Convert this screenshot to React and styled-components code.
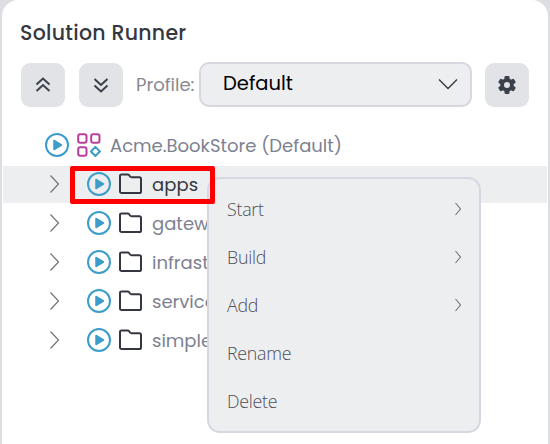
import React from "react";
import styled, { createGlobalStyle } from "styled-components";

const GlobalStyle = createGlobalStyle`
  * { box-sizing: border-box; }
  body { margin: 0; background: #dddde4; }
`;

const Panel = styled.main`
  position: relative;
  width: 546px;
  height: 444px;
  margin-left: 2px;
  overflow: hidden;
  background: #fff;
  border-radius: 16px 16px 0 0;
  font-family: Poppins, Inter, sans-serif;
  font-feature-settings: "cv11" 1;
`;

const Title = styled.h1`
  margin: 0;
  padding: 18px 0 0 18px;
  height: 63px;
  font-size: 20.5px;
  line-height: 30px;
  font-weight: 500;
  letter-spacing: 0.28px;
  color: #353840;
  white-space: nowrap;
`;

const Toolbar = styled.div`
  display: flex;
  align-items: center;
  height: 44px;
  padding-left: 19px;
`;

const IconButton = styled.button`
  display: flex;
  align-items: center;
  justify-content: center;
  flex: none;
  width: 44px;
  height: 44px;
  margin: 0 ${(p) => p.$gap || 0}px 0 0;
  padding: 0;
  border: 0;
  border-radius: 9px;
  background: #e2e3e7;
  color: #3b414b;
`;

const ProfileLabel = styled.label`
  flex: none;
  width: 63px;
  font-size: 18px;
  line-height: 26px;
  color: #8a8a8e;
  white-space: nowrap;
`;

const Select = styled.div`
  display: flex;
  align-items: center;
  justify-content: space-between;
  flex: none;
  width: 273px;
  height: 45px;
  margin: 0 13px 1px 0;
  padding: 0 12px 2px 22px;
  border: 2px solid #d6d7e0;
  border-radius: 10px;
  background: #edeef0;
  font-size: 19.5px;
  letter-spacing: 0.02px;
  color: #000;
`;

const Tree = styled.div`
  display: flex;
  flex-direction: column;
  gap: 2px;
  padding: 20px 1px 0;
`;

const Row = styled.div`
  display: flex;
  align-items: center;
  height: 37px;
  padding: 0 0 1px ${(p) => (p.$root ? 42 : 46)}px;
  background: ${(p) => (p.$active ? "#edeef0" : "transparent")};
  color: ${(p) => (p.$active ? "#353840" : "#7d8190")};
`;

const Toggle = styled.span`
  display: flex;
  width: 38px;
`;

const Play = styled.span`
  display: flex;
  width: ${(p) => (p.$root ? 32 : 31)}px;
`;

const Name = styled.span`
  padding-top: 1px;
  margin-left: ${(p) => (p.$root ? 8 : 10)}px;
  font-size: 18px;
  line-height: 27px;
  letter-spacing: ${(p) => p.$tracking || 0}px;
  white-space: nowrap;
`;

const Menu = styled.div`
  position: absolute;
  left: 205px;
  top: 177px;
  width: 274px;
  height: 256px;
  padding: 6px 17px 0 18px;
  border: 2px solid #d6d7e0;
  border-radius: 13px;
  background: #edeef0;
  font-family: "Open Sans", sans-serif;
  font-weight: 300;
  font-size: 17.8px;
  letter-spacing: -0.25px;
  color: #4d4e57;
`;

const MenuItem = styled.div`
  display: flex;
  align-items: center;
  justify-content: space-between;
  height: 48px;
`;

const Highlight = styled.div`
  position: absolute;
  left: 68px;
  top: 166px;
  width: 145px;
  height: 38px;
  border: 5px solid #fe0000;
  border-radius: 2px;
`;

const DoubleChevron = ({ down }) => (
  <svg width="16" height="18" viewBox="0 0 16 18" fill="none" stroke="currentColor" strokeWidth="2">
    <path d={down ? "M1.5 3l6.5 6 6.5-6M1.5 9.5l6.5 6 6.5-6" : "M1.5 8.5l6.5-6 6.5 6M1.5 15l6.5-6 6.5 6"} />
  </svg>
);

const ChevronDown = () => (
  <svg width="20" height="12" viewBox="0 0 20 12" fill="none" stroke="#34373c" strokeWidth="1.3">
    <path d="M1 1.5l9 9 9-9" />
  </svg>
);

const ChevronRight = () => (
  <svg width="11" height="20" viewBox="0 0 11 20" fill="none" stroke="#707276" strokeWidth="1.2">
    <path d="M1.5 1.5l8 8.5-8 8.5" />
  </svg>
);

const MenuChevron = () => (
  <svg width="8" height="14" viewBox="0 0 8 14" fill="none" stroke="#707276" strokeWidth="1.1">
    <path d="M1.5 1l5 6-5 6" />
  </svg>
);

const Gear = () => (
  <svg width="20" height="20" viewBox="0 0 20 20">
    <g fill="currentColor">
      <circle cx="10" cy="10" r="6.8" />
      <rect x="7.5" y="1" width="5" height="18" rx="1.3" />
      <rect x="7.5" y="1" width="5" height="18" rx="1.3" transform="rotate(60 10 10)" />
      <rect x="7.5" y="1" width="5" height="18" rx="1.3" transform="rotate(120 10 10)" />
    </g>
    <circle cx="10" cy="10" r="3" fill="#e2e3e7" />
  </svg>
);

const PlayIcon = () => (
  <svg width="24" height="24" viewBox="0 0 24 24">
    <circle cx="12" cy="12" r="11" fill="none" stroke="#3d9dca" strokeWidth="2" />
    <path d="M9 7.5v9l7.5-4.5z" fill="#3d9dca" stroke="#3d9dca" strokeWidth="1.5" strokeLinejoin="round" />
  </svg>
);

const SolutionIcon = () => (
  <svg width="25" height="24" viewBox="0 0 25 24" fill="none" stroke="#b93f9b" strokeWidth="2">
    <rect x="1.2" y="1.2" width="8.3" height="8.5" rx="2" />
    <rect x="14.2" y="1.2" width="8.3" height="8.5" rx="2" />
    <rect x="1.2" y="14.2" width="8.3" height="8.5" rx="2" />
    <path d="M18.4 13.9l4.5 4.6-4.5 4.5-4.5-4.5z" stroke="#3d9dca" strokeLinejoin="round" />
  </svg>
);

const Folder = () => (
  <svg width="24" height="22" viewBox="0 0 24 22" fill="none" stroke="#343741" strokeWidth="2" strokeLinejoin="round">
    <path d="M3.7 1.4h5.9c.8 0 1.2.3 1.6.9l.8 1.2c.4.5.8.7 1.5.7h7.8c1 0 1.7.6 1.7 1.6v12.7c0 .9-.7 1.6-1.7 1.6H3.7c-1 0-1.7-.7-1.7-1.6V3c0-1 .7-1.6 1.7-1.6z" />
  </svg>
);

const folders = [
  { name: "apps", active: true, tracking: 0.1 },
  { name: "gateways" },
  { name: "infrastructure" },
  { name: "services" },
  { name: "simple" },
];

const actions = [
  { name: "Start", submenu: true },
  { name: "Build", submenu: true },
  { name: "Add", submenu: true },
  { name: "Rename" },
  { name: "Delete" },
];

export default function App() {
  return (
    <>
      <GlobalStyle />
      <Panel>
        <Title>Solution Runner</Title>
        <Toolbar>
          <IconButton $gap={14}><DoubleChevron /></IconButton>
          <IconButton $gap={13}><DoubleChevron down /></IconButton>
          <ProfileLabel>Profile:</ProfileLabel>
          <Select>Default<ChevronDown /></Select>
          <IconButton><Gear /></IconButton>
        </Toolbar>
        <Tree>
          <Row $root>
            <Play $root><PlayIcon /></Play>
            <SolutionIcon />
            <Name $root>Acme.BookStore (Default)</Name>
          </Row>
          {folders.map((f) => (
            <Row key={f.name} $active={f.active}>
              <Toggle><ChevronRight /></Toggle>
              <Play><PlayIcon /></Play>
              <Folder />
              <Name $tracking={f.tracking}>{f.name}</Name>
            </Row>
          ))}
        </Tree>
        <Menu>
          {actions.map((a) => (
            <MenuItem key={a.name}>
              <span>{a.name}</span>
              {a.submenu && <MenuChevron />}
            </MenuItem>
          ))}
        </Menu>
        <Highlight />
      </Panel>
    </>
  );
}
